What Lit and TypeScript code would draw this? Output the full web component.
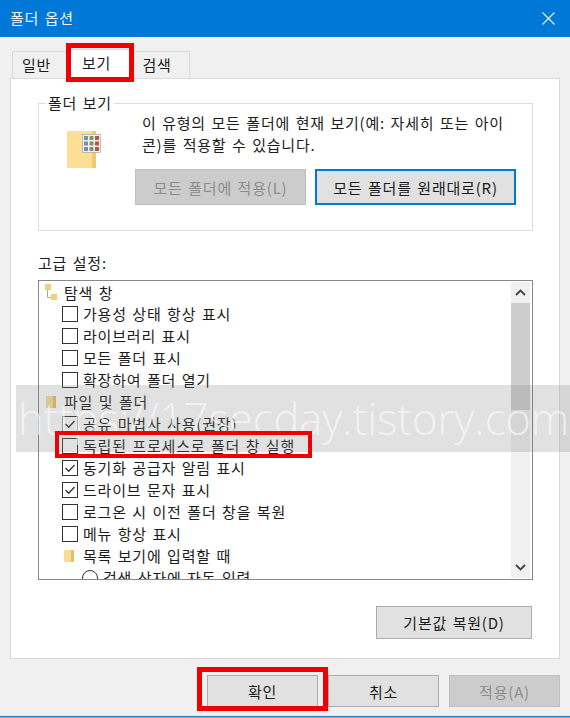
import { LitElement, html, css, svg } from "lit";
import { customElement } from "lit/decorators.js";

type Row = { t: string; k: "tree" | "folder" | "box" | "check" | "sub" | "radio" };
const rows: Row[] = [
  { t: "탐색 창", k: "tree" },
  { t: "가용성 상태 항상 표시", k: "box" },
  { t: "라이브러리 표시", k: "box" },
  { t: "모든 폴더 표시", k: "box" },
  { t: "확장하여 폴더 열기", k: "box" },
  { t: "파일 및 폴더", k: "folder" },
  { t: "공유 마법사 사용(권장)", k: "check" },
  { t: "독립된 프로세스로 폴더 창 실행", k: "box" },
  { t: "동기화 공급자 알림 표시", k: "check" },
  { t: "드라이브 문자 표시", k: "check" },
  { t: "로그온 시 이전 폴더 창을 복원", k: "box" },
  { t: "메뉴 항상 표시", k: "box" },
  { t: "목록 보기에 입력할 때", k: "sub" },
  { t: "검색 상자에 자동 입력", k: "radio" },
];

const treeIcon = svg`<svg width="15" height="16" viewBox="0 0 15 16"><path d="M3.5 6v7.5h4" fill="none" stroke="#aaa"/><rect x="1" y="0" width="6" height="6" fill="#f2cf7a"/><rect x="7" y="10" width="6" height="6" fill="#f2cf7a"/></svg>`;
const folderIcon = svg`<svg width="10" height="12" viewBox="0 0 10 12"><rect width="10" height="12" fill="#f8dd98"/><rect x="7" width="3" height="12" fill="#e6be66"/></svg>`;
const checkIcon = svg`<svg class="tick" width="14" height="14" viewBox="0 0 14 14"><path d="M2.5 7l3.2 3.2L11.5 4" fill="none" stroke="#333" stroke-width="1.3"/></svg>`;

@customElement("app-root")
export class AppRoot extends LitElement {
  static styles = css`
    :host { display: block; width: 570px; height: 718px; position: relative; overflow: hidden; background: #f0f0f0; font-family: "Noto Sans CJK KR", "Liberation Sans", sans-serif; font-size: 15px; letter-spacing: .8px; word-spacing: 1.4px; color: #1c1c1c; }
    .dialog { display: flex; flex-direction: column; height: 718px; box-sizing: border-box; }
    .title { height: 37px; flex: none; background: #0078d7; color: #e8f2fb; display: flex; align-items: center; justify-content: space-between; padding: 0 15px 0 10px; }
    .title span { margin-bottom: 2px; }
    .tabs { display: flex; height: 28px; margin: 13px 0 0 12px; flex: none; align-items: flex-end; }
    .tab { height: 27px; box-sizing: border-box; border: 1px solid #d9d9d9; border-bottom: 0; display: flex; align-items: center; justify-content: center; background: #f0f0f0; padding-bottom: 2px; }
    .tab.t1 { width: 55px; padding-right: 6px; }
    .tab.t2 { width: 65px; height: 30px; background: #fff; margin-bottom: -1px; position: relative; z-index: 1; padding-right: 6px; padding-bottom: 5px; }
    .tab.t3 { width: 58px; padding-right: 8px; }
    .panel { margin: 0 10px; height: 581px; flex: none; box-sizing: border-box; background: #fff; border: 1px solid #dadada; padding: 24px 26px 0 27px; }
    .group { height: 128px; box-sizing: border-box; border: 1px solid #dcdcdc; position: relative; display: flex; padding: 8px 16px 0 28px; }
    .legend { position: absolute; top: -11px; left: 7px; background: #fff; padding: 0 2px; line-height: 20px; }
    .fold { width: 34px; height: 37px; flex: none; margin: 19px 41px 0 0; }
    .gbody { flex: 1; display: flex; flex-direction: column; }
    .desc { line-height: 22px; white-space: nowrap; }
    .gbtns { display: flex; gap: 9px; margin-top: 13px; margin-left: -7px; }
    .btn { box-sizing: border-box; height: 36px; display: flex; align-items: center; justify-content: center; background: #e1e1e1; border: 1px solid #adadad; white-space: nowrap; }
    .btn.dis { background: #cccccc; border-color: #bfbfbf; color: #8c8c8c; }
    .btn.focus { border: 2px solid #0078d7; }
    .w171 { width: 171px; }
    .w201 { width: 201px; }
    .lab { margin-top: 22px; line-height: 20px; }
    .list { margin-top: 7px; height: 300px; box-sizing: border-box; border: 1px solid #828790; position: relative; overflow: hidden; display: flex; }
    .rows { flex: 1; overflow: hidden; }
    .row { height: 22px; display: flex; align-items: center; white-space: nowrap; }
    .row > span:last-child { margin-bottom: 2px; }
    .row.tree > span:last-child { margin-bottom: 0; }
    .row.tree { padding-left: 5px; gap: 5px; }
    .row.folder { padding-left: 7px; gap: 8px; }
    .row.box, .row.check { padding-left: 23px; gap: 5px; }
    .row.sub { padding-left: 25px; gap: 9px; }
    .row.radio { padding-left: 43px; gap: 5px; }
    .cb { width: 16px; height: 16px; box-sizing: border-box; border: 1px solid #333; background: #fff; display: flex; align-items: center; justify-content: center; flex: none; }
    .rd { width: 16px; height: 16px; box-sizing: border-box; border: 1px solid #333; border-radius: 50%; background: #fff; flex: none; }
    .sb { width: 19px; flex: none; margin: 1px 2px 1px 0; display: flex; flex-direction: column; background: #f0f0f0; }
    .sb .arr { height: 21px; display: flex; align-items: center; justify-content: center; flex: none; }
    .sb .thumb { height: 107px; background: #cdcdcd; flex: none; }
    .sb .track { flex: 1; }
    .restore { display: flex; justify-content: flex-end; margin: 26px 1px 0 0; }
    .restore .btn { width: 156px; height: 33px; }
    .foot { display: flex; margin: 16px 9px 0 207px; gap: 10px; flex: none; }
    .foot .btn { width: 111px; height: 32px; }
    .edge { margin-top: auto; height: 3px; flex: none; background: linear-gradient(#d6eaf7 0 1px, #3b7eb0 1px 2px, #7fadd0 2px 3px); }
    .redbox { position: absolute; box-sizing: border-box; border: 5px solid #f00000; z-index: 3; pointer-events: none; }
    .r1 { left: 66px; top: 43px; width: 68px; height: 39px; }
    .r2 { left: 55px; top: 431px; width: 257px; height: 27px; border-width: 4px; }
    .r3 { left: 197px; top: 667px; width: 131px; height: 44px; }
    .wm { position: absolute; z-index: 2; left: 16px; right: 0; top: 385px; height: 67px; background: rgba(128,128,128,.24); color: rgba(255,255,255,.6); font-family: "Open Sans", "Liberation Sans", sans-serif; font-weight: 300; font-size: 43.5px; letter-spacing: 0; word-spacing: 0; line-height: 67px; padding-left: 2px; white-space: nowrap; overflow: hidden; }
  `;

  private row(r: Row) {
    let lead: unknown = null;
    if (r.k === "tree") lead = treeIcon;
    else if (r.k === "folder" || r.k === "sub") lead = folderIcon;
    else if (r.k === "box") lead = html`<span class="cb"></span>`;
    else if (r.k === "check") lead = html`<span class="cb">${checkIcon}</span>`;
    else lead = html`<span class="rd"></span>`;
    return html`<div class="row ${r.k}">${lead}<span>${r.t}</span></div>`;
  }

  render() {
    return html`
      <div class="dialog">
        <div class="title">
          <span>폴더 옵션</span>
          <svg width="13" height="13" viewBox="0 0 13 13"><path d="M.5.5l12 12M12.5.5l-12 12" stroke="#e8f2fb" stroke-width="1.1" fill="none"/></svg>
        </div>
        <div class="tabs">
          <div class="tab t1">일반</div>
          <div class="tab t2">보기</div>
          <div class="tab t3">검색</div>
        </div>
        <div class="panel">
          <div class="group">
            <span class="legend">폴더 보기</span>
            <svg class="fold" viewBox="0 0 34 37">
              <rect x="0" y="0" width="29" height="37" fill="#fadf94"/>
              <rect x="25" y="0" width="4" height="37" fill="#f0ca72"/>
              <rect x="15.5" y="3.5" width="18" height="18" fill="#f2f2f2" stroke="#9a9a9a" stroke-width=".6"/>
              ${[0, 1, 2].flatMap((y) =>
                [0, 1, 2].map(
                  (x) => svg`<rect x="${17 + x * 5.5}" y="${5 + y * 5.5}" width="4" height="4" fill="${x === 2 ? "#b8553a" : x === 1 ? "#8a8f6a" : "#6f8fb5"}"/>`
                )
              )}
            </svg>
            <div class="gbody">
              <div class="desc">이 유형의 모든 폴더에 현재 보기(예: 자세히 또는 아이<br />콘)를 적용할 수 있습니다.</div>
              <div class="gbtns">
                <div class="btn dis w171">모든 폴더에 적용(L)</div>
                <div class="btn focus w201">모든 폴더를 원래대로(R)</div>
              </div>
            </div>
          </div>
          <div class="lab">고급 설정:</div>
          <div class="list">
            <div class="rows">${rows.map((r) => this.row(r))}</div>
            <div class="sb">
              <div class="arr"><svg width="11" height="7" viewBox="0 0 11 7"><path d="M1 6l4.5-4.5L10 6" fill="none" stroke="#444" stroke-width="1.8"/></svg></div>
              <div class="thumb"></div>
              <div class="track"></div>
              <div class="arr"><svg width="11" height="7" viewBox="0 0 11 7"><path d="M1 1l4.5 4.5L10 1" fill="none" stroke="#444" stroke-width="1.8"/></svg></div>
            </div>
          </div>
          <div class="restore"><div class="btn">기본값 복원(D)</div></div>
        </div>
        <div class="foot">
          <div class="btn">확인</div>
          <div class="btn">취소</div>
          <div class="btn dis">적용(A)</div>
        </div>
        <div class="edge"></div>
      </div>
      <div class="wm">https://17secday.tistory.com</div>
      <div class="redbox r1"></div>
      <div class="redbox r2"></div>
      <div class="redbox r3"></div>
    `;
  }
}
